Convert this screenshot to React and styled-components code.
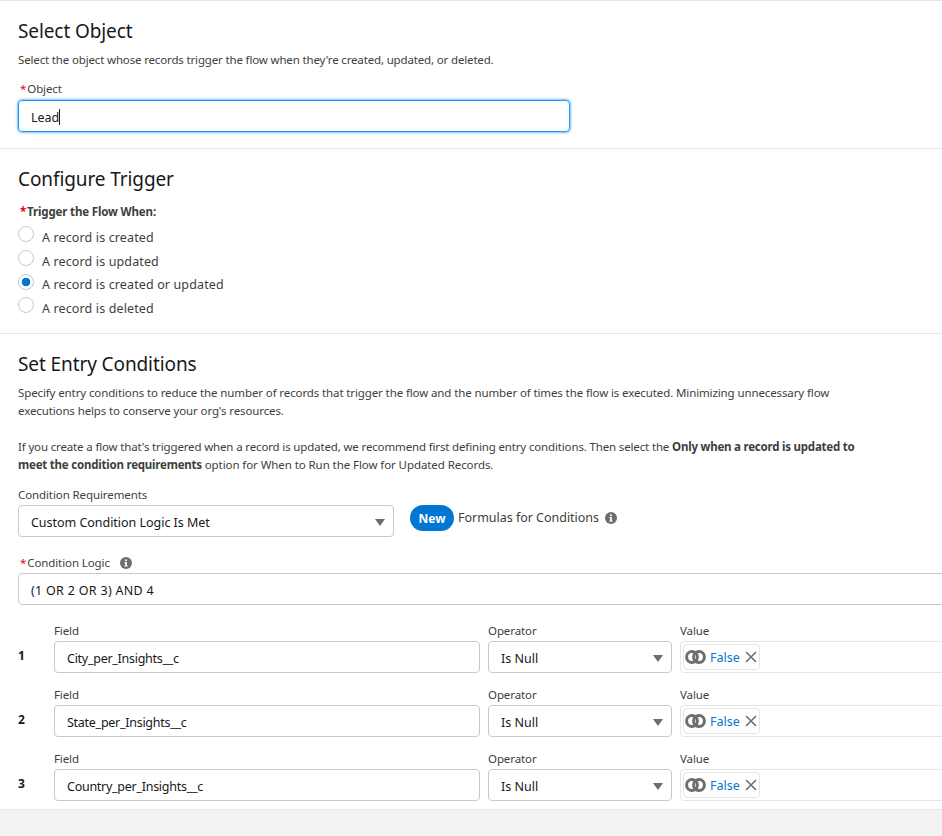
import React from "react";
import styled, { createGlobalStyle } from "styled-components";

const GlobalStyle = createGlobalStyle`
  html, body {
    margin: 0;
    padding: 0;
    background: #fff;
  }
  body {
    font-family: "Noto Sans", "Open Sans", sans-serif;
    color: #3e3e3c;
    font-size: 12px;
  }
`;

const InfoIcon = () => (
  <InfoSvg viewBox="0 0 12 12">
    <circle cx="6" cy="6" r="6" fill="#706e6b" />
    <rect x="5.1" y="5.2" width="1.8" height="4" fill="#fff" />
    <rect x="4.4" y="5.1" width="2.2" height="0.9" fill="#fff" />
    <rect x="4.4" y="8.6" width="3.2" height="0.9" fill="#fff" />
    <circle cx="6" cy="3.3" r="1.05" fill="#fff" />
  </InfoSvg>
);

const Caret = () => (
  <CaretSvg viewBox="0 0 10 7">
    <path d="M0 0h10L5 7z" fill="#706e6b" />
  </CaretSvg>
);

const LinkedRings = () => (
  <RingSvg viewBox="0 0 21 14" fill="none" stroke="#706e6b" strokeWidth="3">
    <circle cx="7" cy="7" r="5.4" />
    <circle cx="14" cy="7" r="5.4" />
  </RingSvg>
);

const Radio = ({ label, checked }) => (
  <RadioRow>
    <RadioDot checked={checked} />
    <RadioText>{label}</RadioText>
  </RadioRow>
);

const ConditionRow = ({ index, field }) => (
  <Row>
    <RowIndex>{index}</RowIndex>
    <FieldCol>
      <SmallLabel>Field</SmallLabel>
      <RowInput>
        <FieldName>{field}</FieldName>
      </RowInput>
    </FieldCol>
    <OperatorCol>
      <SmallLabel>Operator</SmallLabel>
      <RowInput>
        Is Null
        <Caret />
      </RowInput>
    </OperatorCol>
    <ValueCol>
      <SmallLabel>Value</SmallLabel>
      <ValueBox>
        <Pill>
          <LinkedRings />
          <PillText>False</PillText>
          <CloseSvg viewBox="0 0 12 12">
            <path d="M1 1l10 10M11 1L1 11" stroke="#706e6b" strokeWidth="1.6" />
          </CloseSvg>
        </Pill>
      </ValueBox>
    </ValueCol>
  </Row>
);

const App = () => {
  return (
    <Page>
      <GlobalStyle />
      <SelectSection>
        <Title>Select Object</Title>
        <Description>
          Select the object whose records trigger the flow when they're created,
          updated, or deleted.
        </Description>
        <ObjectLabel>
          <Star>*</Star>Object
        </ObjectLabel>
        <FocusInput>
          Lead
          <Cursor />
        </FocusInput>
      </SelectSection>

      <TriggerSection>
        <Title>Configure Trigger</Title>
        <BoldLabel>
          <Star>*</Star>Trigger the Flow When:
        </BoldLabel>
        <Radio label="A record is created" />
        <Radio label="A record is updated" />
        <Radio label="A record is created or updated" checked />
        <Radio label="A record is deleted" />
      </TriggerSection>

      <ConditionSection>
        <Title>Set Entry Conditions</Title>
        <Paragraph>
          Specify entry conditions to reduce the number of records that trigger
          the flow and the number of times the flow is executed. Minimizing
          unnecessary flow executions helps to conserve your org's resources.
        </Paragraph>
        <SecondParagraph>
          If you create a flow that's triggered when a record is updated, we
          recommend first defining entry conditions. Then select the{" "}
          <b>Only when a record is updated to meet the condition requirements</b>{" "}
          <Tail>option for When to Run the Flow for Updated Records.</Tail>
        </SecondParagraph>
        <Label>Condition Requirements</Label>
        <RequirementRow>
          <SelectBox>
            Custom Condition Logic Is Met
            <Caret />
          </SelectBox>
          <NewPill>New</NewPill>
          <FormulaText>Formulas for Conditions</FormulaText>
          <InfoIcon />
        </RequirementRow>
        <LogicLabel>
          <Star>*</Star>Condition Logic
          <InfoIcon />
        </LogicLabel>
        <LogicInput>(1 OR 2 OR 3) AND 4</LogicInput>
        <Rows>
          <ConditionRow index="1" field="City_per_Insights__c" />
          <ConditionRow index="2" field="State_per_Insights__c" />
          <ConditionRow index="3" field="Country_per_Insights__c" />
        </Rows>
      </ConditionSection>
      <Footer />
    </Page>
  );
};

export default App;

const Page = styled.div`
  width: 942px;
  height: 836px;
  overflow: hidden;
  display: flex;
  flex-direction: column;
  border-top: 1px solid #e5e5e5;
  box-sizing: border-box;
`;

const Section = styled.section`
  padding: 0 0 0 18px;
  border-bottom: 1px solid #e5e5e5;
  box-sizing: border-box;
  flex: none;
`;

const SelectSection = styled(Section)`
  height: 148px;
  padding-top: 16px;
`;

const TriggerSection = styled(Section)`
  height: 185px;
  padding-top: 16px;
`;

const ConditionSection = styled(Section)`
  height: 476px;
  padding-top: 16px;
`;

const Title = styled.h2`
  margin: 0;
  font-size: 19px;
  font-weight: 400;
  line-height: 28px;
  color: #181818;
  letter-spacing: -0.1px;
`;

const Description = styled.p`
  margin: 6px 0 0;
  font-size: 11.5px;
  line-height: 18px;
  letter-spacing: -0.155px;
`;

const Label = styled.div`
  margin-top: 12px;
  font-size: 11.5px;
  line-height: 18px;
  letter-spacing: -0.1px;
`;

const ObjectLabel = styled(Label)`
  margin-top: 11px;
`;

const Star = styled.span`
  color: #ea001e;
  margin: 0 1px 0 2px;
`;

const FocusInput = styled.div`
  width: 552px;
  height: 32px;
  margin-top: 2px;
  box-sizing: border-box;
  border: 1px solid #1b96ff;
  border-radius: 4px;
  box-shadow: 0 0 3px #0176d3;
  padding: 2px 0 0 12px;
  display: flex;
  align-items: center;
  font-size: 12.5px;
  color: #181818;
`;

const Cursor = styled.span`
  width: 1px;
  height: 16px;
  background: #181818;
`;

const BoldLabel = styled.div`
  margin-top: 10px;
  font-size: 11.5px;
  font-weight: 700;
  line-height: 18px;
  letter-spacing: -0.15px;
  margin-bottom: 4px;
`;

const RadioRow = styled.div`
  display: flex;
  align-items: center;
  height: 23.7px;
`;

const RadioDot = styled.span`
  width: 16px;
  height: 16px;
  box-sizing: border-box;
  border: 1px solid #c9c9c9;
  border-radius: 50%;
  margin-top: -5px;
  background: ${(p) =>
    p.checked ? "radial-gradient(circle, #0176d3 0 4px, #fff 4.6px)" : "#fff"};
`;

const RadioText = styled.span`
  margin-left: 8px;
  padding-top: 2px;
  font-size: 12.5px;
  line-height: 18px;
  letter-spacing: 0.13px;
`;

const Paragraph = styled.p`
  margin: 6px 0 18px;
  width: 850px;
  font-size: 11.5px;
  line-height: 18px;
  letter-spacing: -0.115px;
`;

const SecondParagraph = styled(Paragraph)`
  margin: 0;
  letter-spacing: -0.15px;

  b {
    font-weight: 700;
    letter-spacing: -0.22px;
  }
`;

const Tail = styled.span`
  letter-spacing: -0.08px;
`;

const RequirementRow = styled.div`
  display: flex;
  align-items: flex-start;
  margin-top: 1px;
`;

const SelectBox = styled.div`
  width: 376px;
  height: 32px;
  box-sizing: border-box;
  border: 1px solid #c9c9c9;
  border-radius: 4px;
  padding: 2px 12px 0;
  display: flex;
  align-items: center;
  justify-content: space-between;
  font-size: 12.5px;
  color: #181818;
  letter-spacing: -0.03px;
`;

const CaretSvg = styled.svg`
  width: 10px;
  height: 7px;
  flex: none;
  margin-right: -4px;
`;

const NewPill = styled.span`
  margin-left: 16px;
  width: 44px;
  height: 26px;
  border-radius: 13px;
  background: #0176d3;
  color: #fff;
  font-size: 12px;
  font-weight: 700;
  display: flex;
  align-items: center;
  justify-content: center;
`;

const FormulaText = styled.span`
  margin-left: 4px;
  line-height: 26px;
  font-size: 12.5px;
  letter-spacing: -0.02px;
`;

const InfoSvg = styled.svg`
  width: 12px;
  height: 12px;
  flex: none;
  margin: 7px 0 0 6px;
`;

const LogicLabel = styled(Label)`
  display: flex;
  margin-top: 17px;

  ${InfoSvg} {
    margin: 3px 0 0 10px;
  }
`;

const LogicInput = styled.div`
  width: 1000px;
  height: 32px;
  margin-top: 1px;
  box-sizing: border-box;
  border: 1px solid #c9c9c9;
  border-radius: 4px;
  padding: 3px 0 0 12px;
  display: flex;
  align-items: center;
  font-size: 12.5px;
  color: #181818;
  letter-spacing: 0.3px;
`;

const Rows = styled.div`
  margin-top: 17px;
  display: flex;
  flex-direction: column;
`;

const Row = styled.div`
  display: flex;
  height: 64px;
  gap: 8px;
`;

const RowIndex = styled.div`
  width: 28px;
  flex: none;
  padding: 25px 0 0 0;
  box-sizing: border-box;
  font-size: 12px;
  font-weight: 700;
  line-height: 18px;
  color: #181818;
  text-indent: 0;
`;

const SmallLabel = styled.div`
  font-size: 11.5px;
  line-height: 18px;
  letter-spacing: -0.1px;
  margin-bottom: 1px;
`;

const FieldCol = styled.div`
  width: 426px;
  flex: none;
`;

const OperatorCol = styled.div`
  width: 184px;
  flex: none;
`;

const ValueCol = styled.div`
  width: 300px;
  flex: none;
`;

const RowInput = styled.div`
  height: 32px;
  box-sizing: border-box;
  border: 1px solid #c9c9c9;
  border-radius: 4px;
  padding: 2px 12px 0;
  display: flex;
  align-items: center;
  justify-content: space-between;
  font-size: 12.5px;
  color: #181818;
`;

const FieldName = styled.span`
  letter-spacing: -0.27px;
`;

const ValueBox = styled.div`
  height: 32px;
  box-sizing: border-box;
  border: 1px solid #e5e5e5;
  border-radius: 4px;
  padding: 2px;
`;

const Pill = styled.div`
  display: inline-flex;
  align-items: center;
  height: 26px;
  width: 77px;
  box-sizing: border-box;
  border: 1px solid #e5e5e5;
  border-radius: 4px;
  padding: 0 0 0 1px;
`;

const RingSvg = styled.svg`
  width: 21px;
  height: 14px;
  flex: none;
`;

const PillText = styled.span`
  margin: 1px 0 0 4px;
  font-size: 12.5px;
  color: #0176d3;
`;

const CloseSvg = styled.svg`
  width: 12px;
  height: 12px;
  margin-left: 5px;
  flex: none;
`;

const Footer = styled.div`
  flex: 1;
  background: #f3f3f3;
`;
